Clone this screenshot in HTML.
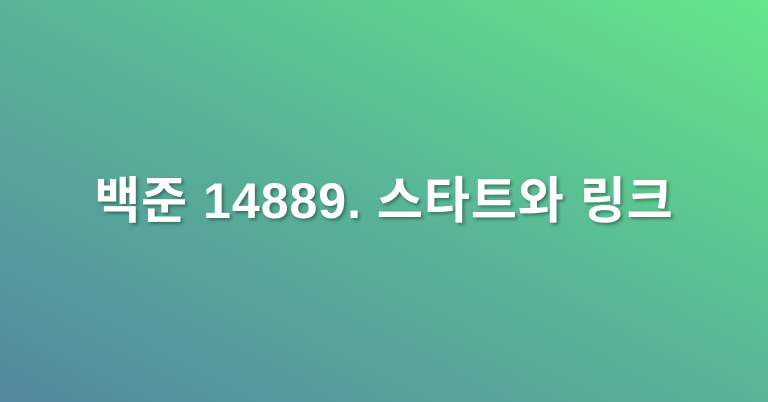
<!DOCTYPE html>
<html><head><meta charset="utf-8"><style>
html,body{margin:0;padding:0}
body{width:768px;height:402px;overflow:hidden;background:linear-gradient(to top right,#5488a0 0%,#58b496 50%,#63e688 100%);position:relative}
.t{position:absolute;left:0;width:768px;top:171px;text-align:center;font-family:"Liberation Sans","Noto Sans CJK KR",sans-serif;font-weight:bold;font-size:50px;line-height:60px;color:#fff;text-shadow:2px 2px 3px rgba(0,0,0,0.35);letter-spacing:1px}
</style></head><body><div class="t">백준 14889. 스타트와 링크</div></body></html>
